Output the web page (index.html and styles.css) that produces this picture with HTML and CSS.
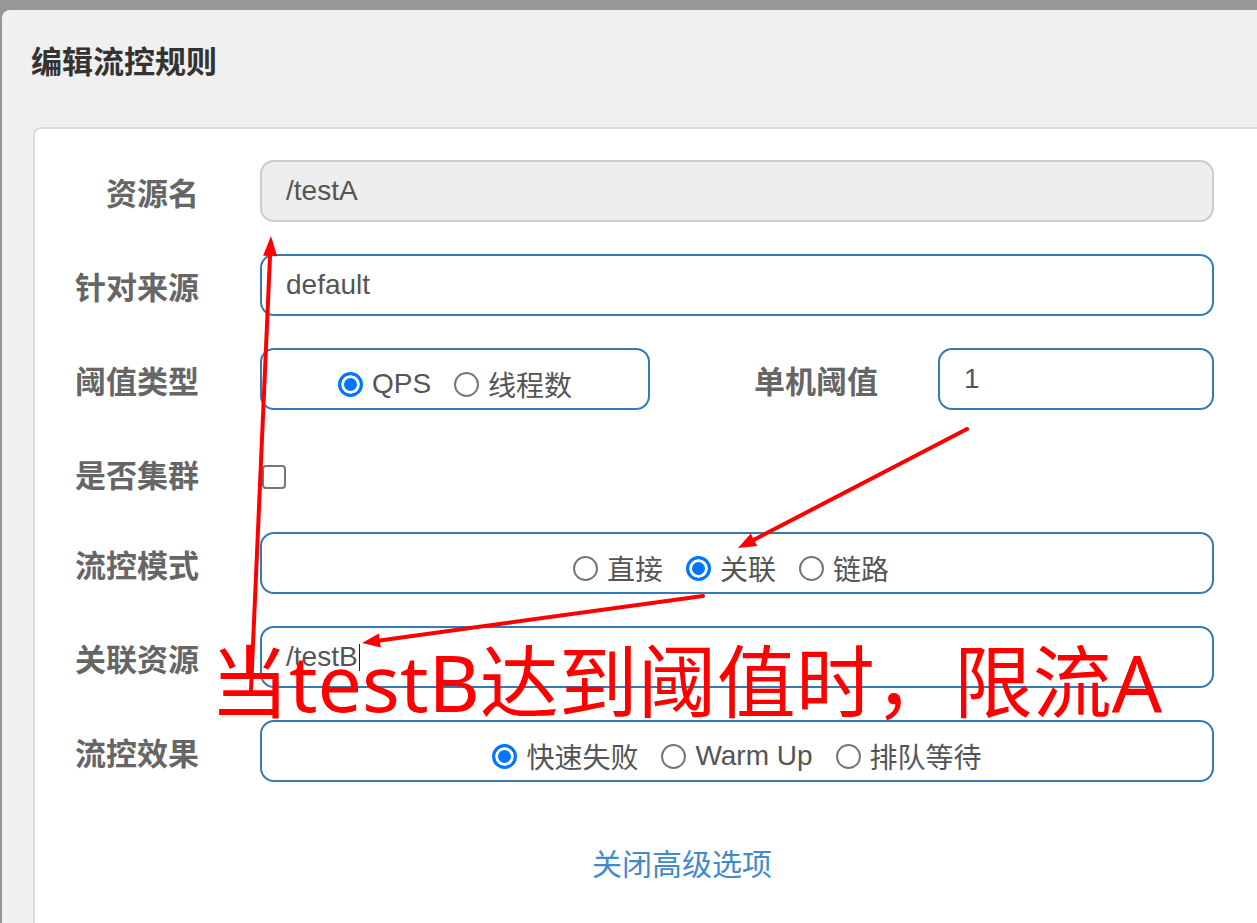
FILE: index.html
```html
<!DOCTYPE html>
<html lang="zh-CN">
<head>
<meta charset="utf-8">
<title>编辑流控规则</title>
<link rel="stylesheet" href="styles.css">
</head>
<body>
<div class="modal">
  <div class="modal-header"><h4 class="title">编辑流控规则</h4></div>
  <div class="card">
    <div class="row">
      <div class="lbl">资源名</div>
      <div class="ctrl"><div class="input disabled">/testA</div></div>
    </div>
    <div class="row">
      <div class="lbl">针对来源</div>
      <div class="ctrl"><div class="input">default</div></div>
    </div>
    <div class="row">
      <div class="lbl">阈值类型</div>
      <div class="ctrl">
        <div class="radios narrow">
          <span class="radio"><span class="dot on"></span>QPS</span>
          <span class="radio"><span class="dot"></span>线程数</span>
        </div>
        <div class="lbl lbl-mid">单机阈值</div>
        <div class="input small">1</div>
      </div>
    </div>
    <div class="row row-check">
      <div class="lbl">是否集群</div>
      <div class="ctrl"><span class="checkbox"></span></div>
    </div>
    <div class="row">
      <div class="lbl">流控模式</div>
      <div class="ctrl">
        <div class="radios shifted">
          <span class="radio"><span class="dot"></span>直接</span>
          <span class="radio"><span class="dot on"></span>关联</span>
          <span class="radio"><span class="dot"></span>链路</span>
        </div>
      </div>
    </div>
    <div class="row">
      <div class="lbl">关联资源</div>
      <div class="ctrl"><div class="input">/testB<span class="caret"></span></div></div>
    </div>
    <div class="row">
      <div class="lbl">流控效果</div>
      <div class="ctrl">
        <div class="radios">
          <span class="radio"><span class="dot on"></span>快速失败</span>
          <span class="radio"><span class="dot"></span>Warm Up</span>
          <span class="radio"><span class="dot"></span>排队等待</span>
        </div>
      </div>
    </div>
    <div class="link">关闭高级选项</div>
  </div>
</div>

<svg class="annot" width="1257" height="923" viewBox="0 0 1257 923" xmlns="http://www.w3.org/2000/svg">
  <g stroke="#ff0000" stroke-width="4" stroke-linecap="round" fill="none">
    <line x1="251" y1="690" x2="270.1" y2="254"/>
    <line x1="967" y1="429" x2="754" y2="539.7"/>
    <line x1="703" y1="596" x2="379.8" y2="640.5"/>
  </g>
  <g fill="#ff0000">
    <polygon points="271,236 277.1,256.3 263.1,255.7"/>
    <polygon points="738,548 757.2,545.9 750.8,533.5"/>
    <polygon points="362,643 380.8,647.5 378.9,633.6"/>
  </g>
</svg>
<div class="annot-text">当testB达到阈值时，限流A</div>
</body>
</html>
```
FILE: styles.css
```css
html, body {
  margin: 0;
  padding: 0;
  overflow: hidden;
}
body {
  width: 1257px;
  height: 923px;
  background: #979797;
  font-family: "Liberation Sans", "Noto Sans CJK SC", sans-serif;
  position: relative;
}
.modal {
  margin: 10px 0 0 2px;
  width: 1400px;
  height: 913px;
  background: #f0f0f0;
  border-radius: 8px 0 0 0;
}
.modal-header {
  box-sizing: border-box;
  height: 117px;
  padding: 36px 0 0 29px;
}
.title {
  margin: 0;
  font-size: 31px;
  line-height: 34px;
  font-weight: bold;
  color: #333;
}
.card {
  margin-left: 31px;
  width: 1294px;
  height: 800px;
  background: #fff;
  border-top: 2px solid #dcdcdc;
  border-left: 2px solid #dcdcdc;
  border-radius: 8px 0 0 0;
  padding-top: 31px;
}
.row {
  display: flex;
  height: 62px;
  margin-bottom: 32px;
}
.row-check {
  height: 58px;
}
.lbl {
  box-sizing: border-box;
  flex: none;
  width: 164px;
  margin-right: 61px;
  padding-top: 8px;
  line-height: 54px;
  text-align: right;
  font-size: 31px;
  font-weight: bold;
  color: #666;
  white-space: nowrap;
}
.lbl-mid {
  width: 228px;
  margin-right: 60px;
}
.ctrl {
  flex: none;
  width: 954px;
  display: flex;
}
.input {
  box-sizing: border-box;
  width: 100%;
  height: 62px;
  border: 2px solid #337ab7;
  border-radius: 14px;
  padding: 0 24px;
  font-size: 28px;
  color: #555;
  display: flex;
  align-items: center;
}
.input.disabled {
  background: #eee;
  border-color: #ccc;
}
.input.small {
  flex: none;
  width: 276px;
}
.caret {
  display: inline-block;
  width: 1px;
  height: 27px;
  margin-left: 1px;
  background: #222;
}
.radios {
  box-sizing: border-box;
  width: 100%;
  height: 62px;
  border: 2px solid #337ab7;
  border-radius: 14px;
  padding-top: 10px;
  display: flex;
  justify-content: center;
  align-items: center;
  gap: 23px;
  font-size: 28px;
  color: #555;
}
.radios.narrow {
  flex: none;
  width: 390px;
}
.radios.shifted {
  padding-right: 12px;
}
.radio {
  display: flex;
  align-items: center;
  white-space: nowrap;
}
.dot {
  box-sizing: border-box;
  width: 25px;
  height: 25px;
  border-radius: 50%;
  border: 2px solid #767676;
  background: #fff;
  margin-right: 9px;
}
.dot.on {
  border: 3px solid #0075ff;
  background: #0075ff;
  box-shadow: inset 0 0 0 3px #fff;
}
.checkbox {
  box-sizing: border-box;
  width: 24px;
  height: 24px;
  margin: 23px 0 0 2px;
  border: 2px solid #767676;
  border-radius: 4px;
  background: #fff;
}
.link {
  margin-top: 62px;
  text-align: center;
  font-size: 30px;
  line-height: 42px;
  color: #428bca;
}
.annot {
  position: absolute;
  left: 0;
  top: 0;
  pointer-events: none;
}
.annot-text {
  position: absolute;
  left: 210px;
  top: 642px;
  font-family: "Noto Sans", "Noto Sans CJK SC", sans-serif;
  font-size: 79px;
  line-height: 1;
  color: #ff0000;
  white-space: nowrap;
  pointer-events: none;
}
```
